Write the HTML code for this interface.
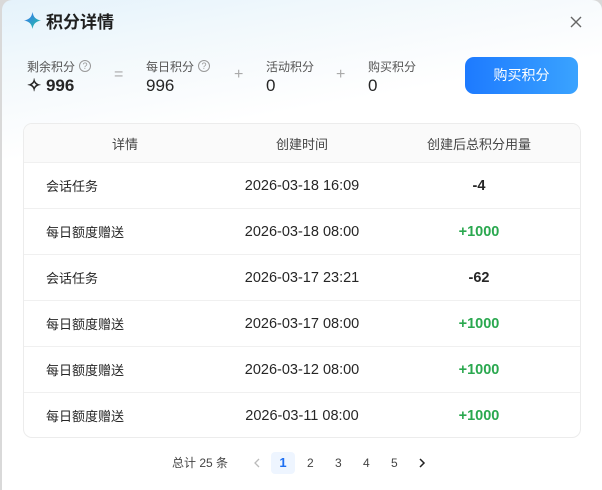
<!DOCTYPE html>
<html><head><meta charset="utf-8"><style>
*{box-sizing:border-box;margin:0;padding:0}
body{width:602px;height:490px;background:#d9d9d9;font-family:"Liberation Sans","Noto Sans CJK SC",sans-serif;color:#262626;overflow:hidden;position:relative}
.modal{position:absolute;left:2px;top:0;width:600px;height:490px;border-radius:10px 10px 0 0;background:linear-gradient(170deg,#e4f2fb 0px,#f0f8fc 60px,#f8fbfd 110px,#fff 160px)}
.title{position:absolute;left:22px;top:8px;font-size:17px;font-weight:bold;color:#1f1f1f;display:flex;align-items:center;gap:5px}
.close{position:absolute;left:568px;top:16px;width:12px;height:12px}
.stat{position:absolute;top:58px}
.stat .l{font-size:12px;color:#555;display:flex;align-items:center;gap:4px;height:16px}
.stat .v{font-size:17px;margin-top:2px;color:#262626}
.q{display:inline-block;width:12px;height:12px;border:1px solid #999;border-radius:50%;font-size:9px;line-height:10px;text-align:center;color:#999}
.op{position:absolute;top:66px;font-size:16px;color:#aaa}
.btn{position:absolute;left:463px;top:57px;width:113px;height:37px;border-radius:9px;background:linear-gradient(90deg,#1d7aff,#3aa3ff);color:#fff;font-size:14px;text-align:center;line-height:37px}
.table{position:absolute;left:21px;top:123px;width:558px;height:315px;border:1px solid #ececec;border-radius:9px;overflow:hidden;background:#fff}
.row{display:flex;height:46px;align-items:center;border-top:1px solid #f0f0f0;font-size:13px}
.hdr{height:38px;background:#fafafa;border-top:none;color:#444}
.c1{width:202px;padding-left:22px}.c2{width:152px;text-align:center;font-size:14.5px}.c3{flex:1;text-align:center;font-weight:bold;font-size:14.5px}
.hdr .c1{text-align:center;padding-left:0}.hdr .c3,.hdr .c2{font-weight:normal;font-size:13px}
.g{color:#2aa84f}
.pg{position:absolute;top:452px;left:0;width:600px;font-size:12px;color:#444}
.pg span{position:absolute;top:0;line-height:22px}
</style></head><body>
<div class="modal">
<div class="title"><svg width="17" height="17" viewBox="0 0 20 20"><defs><linearGradient id="gr" x1="0" y1="0" x2="1" y2="1"><stop offset="0" stop-color="#3b6ff5"/><stop offset="1" stop-color="#22c7a0"/></linearGradient></defs><path d="M10 0C11 6 14 9 20 10C14 11 11 14 10 20C9 14 6 11 0 10C6 9 9 6 10 0Z" fill="url(#gr)"/></svg>积分详情</div>
<svg class="close" viewBox="0 0 12 12"><path d="M1 1L11 11M11 1L1 11" stroke="#666" stroke-width="1.4"/></svg>
<div class="stat" style="left:25px"><div class="l">剩余积分 <span class="q">?</span></div><div class="v" style="font-weight:bold">✧ 996</div></div>
<div class="op" style="left:112px">=</div>
<div class="stat" style="left:144px"><div class="l">每日积分 <span class="q">?</span></div><div class="v">996</div></div>
<div class="op" style="left:232px">+</div>
<div class="stat" style="left:264px"><div class="l">活动积分</div><div class="v">0</div></div>
<div class="op" style="left:334px">+</div>
<div class="stat" style="left:366px"><div class="l">购买积分</div><div class="v">0</div></div>
<div class="btn">购买积分</div>
<div class="table">
<div class="row hdr"><div class="c1">详情</div><div class="c2">创建时间</div><div class="c3">创建后总积分用量</div></div>
<div class="row"><div class="c1">会话任务</div><div class="c2">2026-03-18 16:09</div><div class="c3">-4</div></div>
<div class="row"><div class="c1">每日额度赠送</div><div class="c2">2026-03-18 08:00</div><div class="c3 g">+1000</div></div>
<div class="row"><div class="c1">会话任务</div><div class="c2">2026-03-17 23:21</div><div class="c3">-62</div></div>
<div class="row"><div class="c1">每日额度赠送</div><div class="c2">2026-03-17 08:00</div><div class="c3 g">+1000</div></div>
<div class="row"><div class="c1">每日额度赠送</div><div class="c2">2026-03-12 08:00</div><div class="c3 g">+1000</div></div>
<div class="row"><div class="c1">每日额度赠送</div><div class="c2">2026-03-11 08:00</div><div class="c3 g">+1000</div></div>
</div>
<div class="pg">
<span style="left:170px">总计 25 条</span>
<svg style="position:absolute;left:251px;top:6px" width="8" height="10" viewBox="0 0 8 10"><path d="M6 1L2 5L6 9" stroke="#bbb" stroke-width="1.3" fill="none"/></svg>
<span style="left:269px;width:24px;height:22px;background:#eef5ff;border-radius:4px;text-align:center;color:#1d6ff2;font-weight:bold;font-size:13px">1</span>
<span style="left:305px">2</span><span style="left:333px">3</span><span style="left:361px">4</span><span style="left:389px">5</span>
<svg style="position:absolute;left:416px;top:6px" width="8" height="10" viewBox="0 0 8 10"><path d="M2 1L6 5L2 9" stroke="#222" stroke-width="1.5" fill="none"/></svg>
</div>
</div>
</body></html>
